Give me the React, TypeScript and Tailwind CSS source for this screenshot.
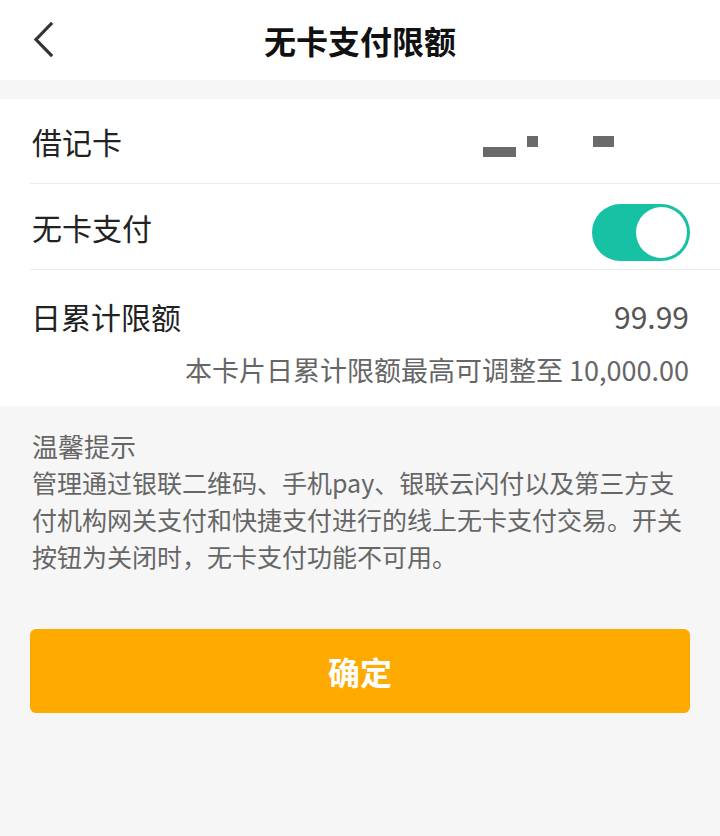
import { useState } from "react";

const font = { fontFamily: "'Noto Sans CJK SC', 'Noto Sans', sans-serif" };

export default function App() {
  const [on, setOn] = useState(true);

  return (
    <div className="min-h-[836px] w-[720px] bg-[#f6f6f6]" style={font}>
      {/* Header */}
      <div className="relative flex h-[80px] items-center justify-center bg-white">
        <button className="absolute left-[28px] top-[19px] flex h-[40px] w-[30px] items-center justify-center">
          <svg width="24" height="36" viewBox="0 0 24 36" fill="none">
            <path d="M20 3 L5 18.5 L20 34" stroke="#333" strokeWidth="3.2" strokeLinecap="square" />
          </svg>
        </button>
        <h1 className="text-[32px] font-bold leading-none text-[#111]">无卡支付限额</h1>
      </div>

      <div className="h-[19px]" />

      {/* Card settings */}
      <div className="bg-white">
        <div className="ml-[30px] flex h-[85px] items-center justify-between border-b border-[#ebebeb] pl-[2px] pr-[30px]">
          <span className="text-[30px] leading-none text-[#222]">借记卡</span>
          <div className="relative mr-[75px] mt-[4px] h-[30px] w-[132px]">
            <div className="absolute left-0 top-[19px] h-[10px] w-[33px] bg-[#6a6a6a]" />
            <div className="absolute left-[44px] top-[8px] h-[11px] w-[11px] bg-[#6a6a6a]" />
            <div className="absolute left-[110px] top-[8px] h-[11px] w-[21px] bg-[#6a6a6a]" />
          </div>
        </div>

        <div className="ml-[30px] flex h-[86px] items-center justify-between border-b border-[#ebebeb] pl-[2px] pr-[30px]">
          <span className="text-[30px] leading-none text-[#222]">无卡支付</span>
          <button
            onClick={() => setOn((v) => !v)}
            className={`mt-[12px] flex h-[57px] w-[98px] items-center rounded-full p-[3px] ${on ? "justify-end bg-[#16c2a3]" : "justify-start bg-[#dddddd]"}`}
          >
            <span className="block h-[51px] w-[51px] rounded-full bg-white" />
          </button>
        </div>

        <div className="px-[31px] pb-[18px] pt-[28px]">
          <div className="flex items-center justify-between">
            <span className="text-[30px] leading-[36px] text-[#222]">日累计限额</span>
            <span className="text-[30px] leading-[36px] text-[#555]">99.99</span>
          </div>
          <p className="mt-[18px] text-right text-[27px] leading-[36px] text-[#666]">
            本卡片日累计限额最高可调整至 10,000.00
          </p>
        </div>
      </div>

      {/* Tips */}
      <div className="px-[32px] pt-[21px] text-[25px] leading-[37px] text-[#666]">
        <p className="text-[26px]">温馨提示</p>
        <p>
          管理通过银联二维码、手机pay、银联云闪付以及第三方支付机构网关支付和快捷支付进行的线上无卡支付交易。开关按钮为关闭时，无卡支付功能不可用。
        </p>
      </div>

      <div className="px-[30px] pt-[54px]">
        <button className="flex h-[84px] w-full items-center justify-center rounded-[6px] bg-[#ffaa00] text-[32px] font-bold text-white">
          确定
        </button>
      </div>
    </div>
  );
}
